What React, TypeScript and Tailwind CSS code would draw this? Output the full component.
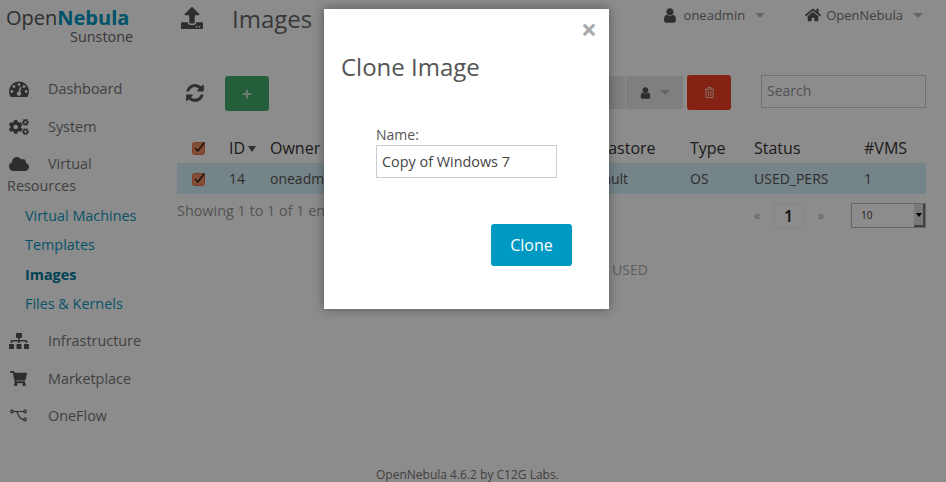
import { ReactNode } from "react";
import { FaCloud, FaCogs, FaHome, FaPlus, FaRegTrashAlt, FaSitemap, FaShoppingCart, FaUpload } from "react-icons/fa";

const rowGrid =
  "grid grid-cols-[37px_41px_80px_80px_152px_108px_64px_110px_62px] pl-[15px] items-center";

// font awesome 4 glyphs, the package only ships the v5 shapes
const UserIcon = ({ className = "" }: { className?: string }) => (
  <svg viewBox="200 100 1400 1600" fill="currentColor" className={className}>
    <path d="M1536 1399q0 109-62.5 187t-150.5 78h-854q-88 0-150.5-78t-62.5-187q0-85 8.5-160.5t31.5-152 58.5-131 94-89 134.5-34.5q131 128 313 128t313-128q76 0 134.5 34.5t94 89 58.5 131 31.5 152 8.5 160.5zm-256-887q0 159-112.5 271.5t-271.5 112.5-271.5-112.5-112.5-271.5 112.5-271.5 271.5-112.5 271.5 112.5 112.5 271.5z" />
  </svg>
);

const RefreshIcon = ({ className = "" }: { className?: string }) => (
  <svg viewBox="120 120 1560 1560" fill="currentColor" className={className}>
    <path d="M1639 1056q0 5-1 7-64 268-268 434.5t-478 166.5q-146 0-282.5-55t-243.5-157l-129 129q-19 19-45 19t-45-19-19-45v-448q0-26 19-45t45-19h448q26 0 45 19t19 45-19 45l-137 137q71 66 161 102t187 36q134 0 250-65t186-179q11-17 53-117 8-23 30-23h192q13 0 22.5 9.5t9.5 22.5zm25-800v448q0 26-19 45t-45 19h-448q-26 0-45-19t-19-45 19-45l138-138q-148-137-349-137-134 0-250 65t-186 179q-11 17-53 117-8 23-30 23h-199q-13 0-22.5-9.5t-9.5-22.5v-7q65-268 270-434.5t480-166.5q146 0 284 55.5t245 156.5l130-129q19-19 45-19t45 19 19 45z" />
  </svg>
);

const DashboardIcon = ({ className = "" }: { className?: string }) => (
  <svg viewBox="0 130 1792 1500" fill="currentColor" className={className}>
    <path d="M384 1152q0-53-37.5-90.5t-90.5-37.5-90.5 37.5-37.5 90.5 37.5 90.5 90.5 37.5 90.5-37.5 37.5-90.5zm192-448q0-53-37.5-90.5t-90.5-37.5-90.5 37.5-37.5 90.5 37.5 90.5 90.5 37.5 90.5-37.5 37.5-90.5zm428 481l101-382q6-26-7.5-48.5t-38.5-29.5-48 6.5-30 39.5l-101 382q-60 5-107 43.5t-63 98.5q-20 77 20 146t117 89 146-20 89-117q16-60-6-117t-72-91zm660-33q0-53-37.5-90.5t-90.5-37.5-90.5 37.5-37.5 90.5 37.5 90.5 90.5 37.5 90.5-37.5 37.5-90.5zm-640-640q0-53-37.5-90.5t-90.5-37.5-90.5 37.5-37.5 90.5 37.5 90.5 90.5 37.5 90.5-37.5 37.5-90.5zm448 192q0-53-37.5-90.5t-90.5-37.5-90.5 37.5-37.5 90.5 37.5 90.5 90.5 37.5 90.5-37.5 37.5-90.5zm320 448q0 261-141 483-19 29-54 29h-1402q-35 0-54-29-141-221-141-483 0-182 71-348t191-286 286-191 348-71 348 71 286 191 191 286 71 348z" />
  </svg>
);

const FlowIcon = () => (
  <svg width="18" height="13" viewBox="0 0 18 13" fill="none" stroke="currentColor" strokeWidth="1.2">
    <circle cx="2" cy="2.5" r="1.3" />
    <circle cx="15" cy="2.5" r="1.3" />
    <circle cx="15" cy="10.5" r="1.3" />
    <path d="M3.3 2.5 H13.7 M6.5 2.5 C8 3.5 8.5 10.5 13.7 10.5" />
  </svg>
);

const Caret = ({ className = "" }: { className?: string }) => (
  <span
    className={
      "inline-block w-0 h-0 border-x-[5px] border-x-transparent border-t-[5px] border-t-[#bbb] " +
      className
    }
  ></span>
);

const Checkbox = () => (
  <svg width="14" height="14" viewBox="0 0 14 14" className="overflow-visible">
    <rect x="0.5" y="1.5" width="12" height="12" rx="2" fill="#ee8f66" stroke="#e56f3e" />
    <path d="M3 7 L5.8 10 L12.5 1.5" fill="none" stroke="#3d2618" strokeWidth="1.7" />
  </svg>
);

const NavItem = ({ icon, label, className = "" }: { icon: ReactNode; label: string; className?: string }) => (
  <div className={"pl-[7px] py-2 leading-[22px] text-[14.4px] text-[#777] " + className}>
    <span className="inline-flex w-[41px] align-middle text-[#555] text-[20px] pl-[2px] -mt-[3px]">{icon}</span>
    {label}
  </div>
);

const SubItem = ({ label, active }: { label: string; active?: boolean }) => (
  <div
    className={
      "h-[29.5px] leading-[29px] pl-[25px] text-[14.4px] " +
      (active ? "font-bold text-[#007a9c]" : "text-[#0d98c0]")
    }
  >
    {label}
  </div>
);

export default function App() {
  return (
    <div className="relative w-[946px] h-[482px] overflow-hidden bg-white flex font-['Open_Sans',sans-serif]">
      {/* Sidebar */}
      <div className="w-[177px] shrink-0">
        <div className="h-[70px] pl-[6px] pt-[5px]">
          <div className="text-[20px] leading-[26px] text-[#555]">
            Open<span className="font-bold text-[#0098c3]">Nebula</span>
          </div>
          <div className="text-[14.4px] leading-[11px] pl-[64px] text-[#666]">Sunstone</div>
        </div>
        <NavItem icon={<DashboardIcon className="w-[20px] h-[17px]" />} label="Dashboard" />
        <NavItem icon={<FaCogs />} label="System" className="!pb-[7px]" />
        <NavItem icon={<FaCloud />} label="Virtual Resources" className="pr-[17px] !pb-[3.6px]" />
        <SubItem label="Virtual Machines" />
        <SubItem label="Templates" />
        <SubItem label="Images" active />
        <SubItem label="Files & Kernels" />
        <NavItem icon={<FaSitemap />} label="Infrastructure" className="mt-[3.4px]" />
        <NavItem icon={<FaShoppingCart className="text-[17px] ml-[1px]" />} label="Marketplace" className="!pb-[7px]" />
        <NavItem icon={<span className="pl-[1px] flex"><FlowIcon /></span>} label="OneFlow" />
      </div>

      {/* Main content */}
      <div className="w-[749px] shrink-0 flex flex-col">
        <div className="h-[75px] flex items-start">
          <FaUpload className="text-[#555] text-[22px] ml-[4px] mt-[7px]" />
          <div className="ml-[29px] text-[24px] leading-[38px] text-[#666]">Images</div>
          <div className="ml-auto flex items-center text-[13px] leading-[30px] text-[#777]">
            <UserIcon className="text-[#555] w-[14px] h-[15px] mr-[7px]" />
            oneadmin
            <Caret className="ml-[10px]" />
            <FaHome className="text-[#555] text-[16px] ml-[40px] mr-[5px]" />
            OpenNebula
            <Caret className="ml-[10px] mr-[3px]" />
          </div>
        </div>

        <div className="h-[57px] flex items-start">
          <RefreshIcon className="text-[#555] w-[18px] h-[18px] ml-[9px] mt-[9px]" />
          <div className="ml-[21px] mt-px w-[44px] h-[35px] rounded-[3px] bg-[#43ac6a] flex items-center justify-center">
            <FaPlus className="text-white/70 text-[10px]" />
          </div>
          <div className="ml-[330px] mt-px w-[26px] h-[33px] rounded-[2px] bg-[#e7e7e7]"></div>
          <div className="ml-[1px] mt-px w-[57px] h-[33px] rounded-[2px] bg-[#e7e7e7] flex items-center pl-[14px]">
            <UserIcon className="text-[#555] w-[11px] h-[12px]" />
            <Caret className="ml-[9px]" />
          </div>
          <div className="ml-[4px] w-[44px] h-[35px] rounded-[3px] bg-[#f04124] flex items-center justify-center">
            <FaRegTrashAlt className="text-white/70 text-[11px]" />
          </div>
          <div className="ml-[30px] w-[165px] h-[33px] border border-[#ccc] pl-[5px] text-[14px] leading-[29px] text-[#999]">
            Search
          </div>
        </div>

        <div className={rowGrid + " h-[31px] text-[16px] text-[#333]"}>
          <Checkbox />
          <div className="flex items-center">
            ID
            <span className="ml-[3px] mt-[3px] w-0 h-0 border-x-[4px] border-x-transparent border-t-[6px] border-t-[#555]"></span>
          </div>
          <div>Owner</div>
          <div>Group</div>
          <div>Name</div>
          <div>Datastore</div>
          <div>Type</div>
          <div>Status</div>
          <div>#VMS</div>
        </div>
        <div className={rowGrid + " h-[31px] bg-[#d5f0f8] text-[14px] leading-[29px] text-[#555]"}>
          <Checkbox />
          <div>14</div>
          <div>oneadmin</div>
          <div>oneadmin</div>
          <div>Windows 7</div>
          <div>default</div>
          <div>OS</div>
          <div>USED_PERS</div>
          <div>1</div>
        </div>

        <div className="h-[25px] mt-[9px] flex items-center">
          <div className="text-[14.4px] leading-[28px] self-start -mt-[6px] text-[#999]">Showing 1 to 1 of 1 entries</div>
          <div className="ml-auto flex items-center">
            <span className="text-[13px] text-[#aaa]">«</span>
            <span className="ml-[13px] w-[30px] h-[25px] border border-[#eee] rounded-[3px] flex items-center justify-center text-[16px] font-semibold text-[#222]">
              1
            </span>
            <span className="ml-[14px] text-[13px] text-[#aaa]">»</span>
            <div className="ml-[27px] w-[75px] h-[25px] border border-[#bbb] flex items-center justify-between pl-[9px] text-[10px] text-[#333]">
              10
              <span className="w-[11px] h-[23px] bg-[#ddd] border-r-2 border-b-2 border-[#777] flex items-center justify-center">
                <span className="w-0 h-0 border-x-[3px] border-x-transparent border-t-[4px] border-t-black"></span>
              </span>
            </div>
          </div>
        </div>

        <div className="mt-[32px] pl-[435px] text-[14px] leading-[20px] text-[#aaa]">USED</div>
        <div className="mt-auto pl-[199px] text-[12px] leading-[14px] text-[#777]">
          OpenNebula 4.6.2 by C12G Labs.
        </div>
      </div>

      {/* Dimmed backdrop */}
      <div className="absolute inset-0 bg-black/45"></div>

      {/* Clone dialog */}
      <div className="absolute left-[324px] top-[9px] w-[285px] h-[300px] bg-white shadow-[0_0_10px_rgba(0,0,0,0.4)]">
        <div className="absolute right-[12px] top-[8px] text-[#aaa] text-[28px] leading-[24px] font-bold">×</div>
        <div className="pl-[17px] pt-[41px] text-[24px] leading-[34px] text-[#555]">Clone Image</div>
        <div className="pl-[52px] mt-[41px] text-[14px] leading-[20px] text-[#555]">Name:</div>
        <div className="ml-[52px] w-[181px] h-[33px] border border-[#ccc] pl-[5px] text-[14.4px] leading-[31px] text-[#444]">
          Copy of Windows 7
        </div>
        <div className="ml-[167px] mt-[46px] w-[81px] h-[42px] rounded-[3px] bg-[#0099c3] flex items-center justify-center text-[16px] text-white">
          Clone
        </div>
      </div>
    </div>
  );
}
